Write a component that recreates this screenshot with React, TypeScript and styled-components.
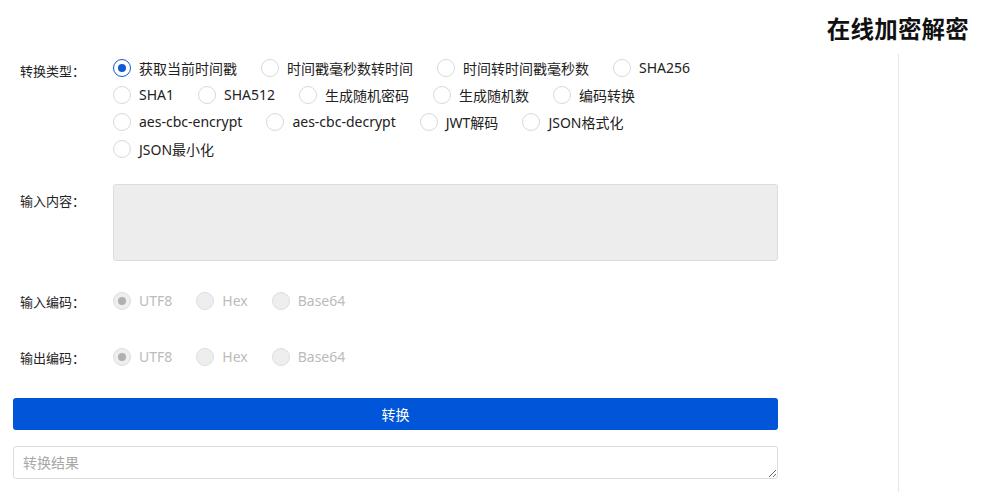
import React from "react";
import styled, { createGlobalStyle } from "styled-components";

const Global = createGlobalStyle`
  html, body { margin: 0; padding: 0; background: #fff; }
  body { font-family: "Noto Sans", "Noto Sans CJK SC", sans-serif; color: #222; }
  * { box-sizing: border-box; }
`;

const Page = styled.div`
  display: flex;
  flex-direction: column;
  width: 984px;
  height: 492px;
  overflow: hidden;
`;

const Header = styled.header`
  height: 54px;
  display: flex;
  align-items: center;
  justify-content: flex-end;
  padding: 2px 15px 0 0;
`;

const Title = styled.h1`
  margin: 0;
  font-size: 23.5px;
  font-weight: 700;
  color: #111;
  letter-spacing: 0.2px;
  font-family: "Noto Sans CJK SC", sans-serif;
`;

const Body = styled.div`
  flex: 1;
  display: flex;
`;

const Main = styled.main`
  width: 898px;
  padding-left: 13px;
`;

const Side = styled.aside`
  flex: 1;
  border-left: 1px solid #e6e6e6;
`;

const Form = styled.div`
  width: 765px;
  display: flex;
  flex-direction: column;
`;

const Row = styled.div<{ $mt?: number }>`
  display: flex;
  align-items: flex-start;
  margin-top: ${(p) => p.$mt ?? 0}px;
`;

const Label = styled.div<{ $pt?: number }>`
  width: 100px;
  flex: none;
  padding-left: 7px;
  padding-top: ${(p) => p.$pt ?? 0}px;
  font-size: 13px;
  line-height: 18px;
  color: #222;
  font-family: "Noto Sans CJK SC", sans-serif;
`;

const RadioGroup = styled.div`
  flex: 1;
  max-width: 645px;
  display: flex;
  flex-wrap: wrap;
`;

const Option = styled.label<{ $disabled?: boolean }>`
  display: inline-flex;
  align-items: center;
  height: 27px;
  margin-right: 24px;
  font-size: 14px;
  color: ${(p) => (p.$disabled ? "#bbbbbb" : "#222")};
  cursor: ${(p) => (p.$disabled ? "not-allowed" : "pointer")};
  white-space: nowrap;
`;

const Circle = styled.span<{ $checked?: boolean; $disabled?: boolean }>`
  width: 18px;
  height: 18px;
  border-radius: 50%;
  margin-right: 8px;
  flex: none;
  position: relative;
  background: ${(p) => (p.$disabled ? "#eeeeee" : "#fff")};
  border: 1px solid
    ${(p) => (p.$disabled ? "#dddddd" : p.$checked ? "#0f5bd6" : "#d9d9d9")};
  &::after {
    content: "";
    display: ${(p) => (p.$checked ? "block" : "none")};
    position: absolute;
    left: 50%;
    top: 50%;
    width: 8px;
    height: 8px;
    margin: -4px 0 0 -4px;
    border-radius: 50%;
    background: ${(p) => (p.$disabled ? "#b0b0b0" : "#0f5bd6")};
  }
`;

const InputArea = styled.div`
  flex: 1;
  height: 77px;
  background: #ededed;
  border: 1px solid #dcdcdc;
  border-radius: 3px;
`;

const Button = styled.button`
  width: 765px;
  height: 32px;
  border: none;
  border-radius: 3px;
  background: #0055d8;
  color: #fff;
  font-size: 14px;
  font-family: "Noto Sans CJK SC", sans-serif;
  cursor: pointer;
`;

const Result = styled.textarea`
  width: 765px;
  height: 33px;
  border: 1px solid #dcdcdc;
  border-radius: 3px;
  padding: 5px 9px;
  font-size: 14px;
  line-height: 20px;
  font-family: "Noto Sans CJK SC", sans-serif;
  color: #333;
  outline: none;
  &::placeholder { color: #a8a8a8; }
`;

const types = [
  "获取当前时间戳",
  "时间戳毫秒数转时间",
  "时间转时间戳毫秒数",
  "SHA256",
  "SHA1",
  "SHA512",
  "生成随机密码",
  "生成随机数",
  "编码转换",
  "aes-cbc-encrypt",
  "aes-cbc-decrypt",
  "JWT解码",
  "JSON格式化",
  "JSON最小化",
];

const encodings = ["UTF8", "Hex", "Base64"];

function Radio({ label, checked, disabled }: { label: string; checked?: boolean; disabled?: boolean }) {
  return (
    <Option $disabled={disabled}>
      <Circle $checked={checked} $disabled={disabled} />
      {label}
    </Option>
  );
}

export default function App() {
  return (
    <Page>
      <Global />
      <Header>
        <Title>在线加密解密</Title>
      </Header>
      <Body>
        <Main>
          <Form>
            <Row>
              <Label $pt={8}>转换类型：</Label>
              <RadioGroup>
                {types.map((t, i) => (
                  <Radio key={t} label={t} checked={i === 0} />
                ))}
              </RadioGroup>
            </Row>
            <Row $mt={22}>
              <Label $pt={8}>输入内容：</Label>
              <InputArea />
            </Row>
            <Row $mt={26}>
              <Label $pt={6}>输入编码：</Label>
              <RadioGroup>
                {encodings.map((e, i) => (
                  <Radio key={e} label={e} checked={i === 0} disabled />
                ))}
              </RadioGroup>
            </Row>
            <Row $mt={29}>
              <Label $pt={6}>输出编码：</Label>
              <RadioGroup>
                {encodings.map((e, i) => (
                  <Radio key={e} label={e} checked={i === 0} disabled />
                ))}
              </RadioGroup>
            </Row>
            <Row $mt={28}>
              <Button>转换</Button>
            </Row>
            <Row $mt={16}>
              <Result placeholder="转换结果" />
            </Row>
          </Form>
        </Main>
        <Side />
      </Body>
    </Page>
  );
}
